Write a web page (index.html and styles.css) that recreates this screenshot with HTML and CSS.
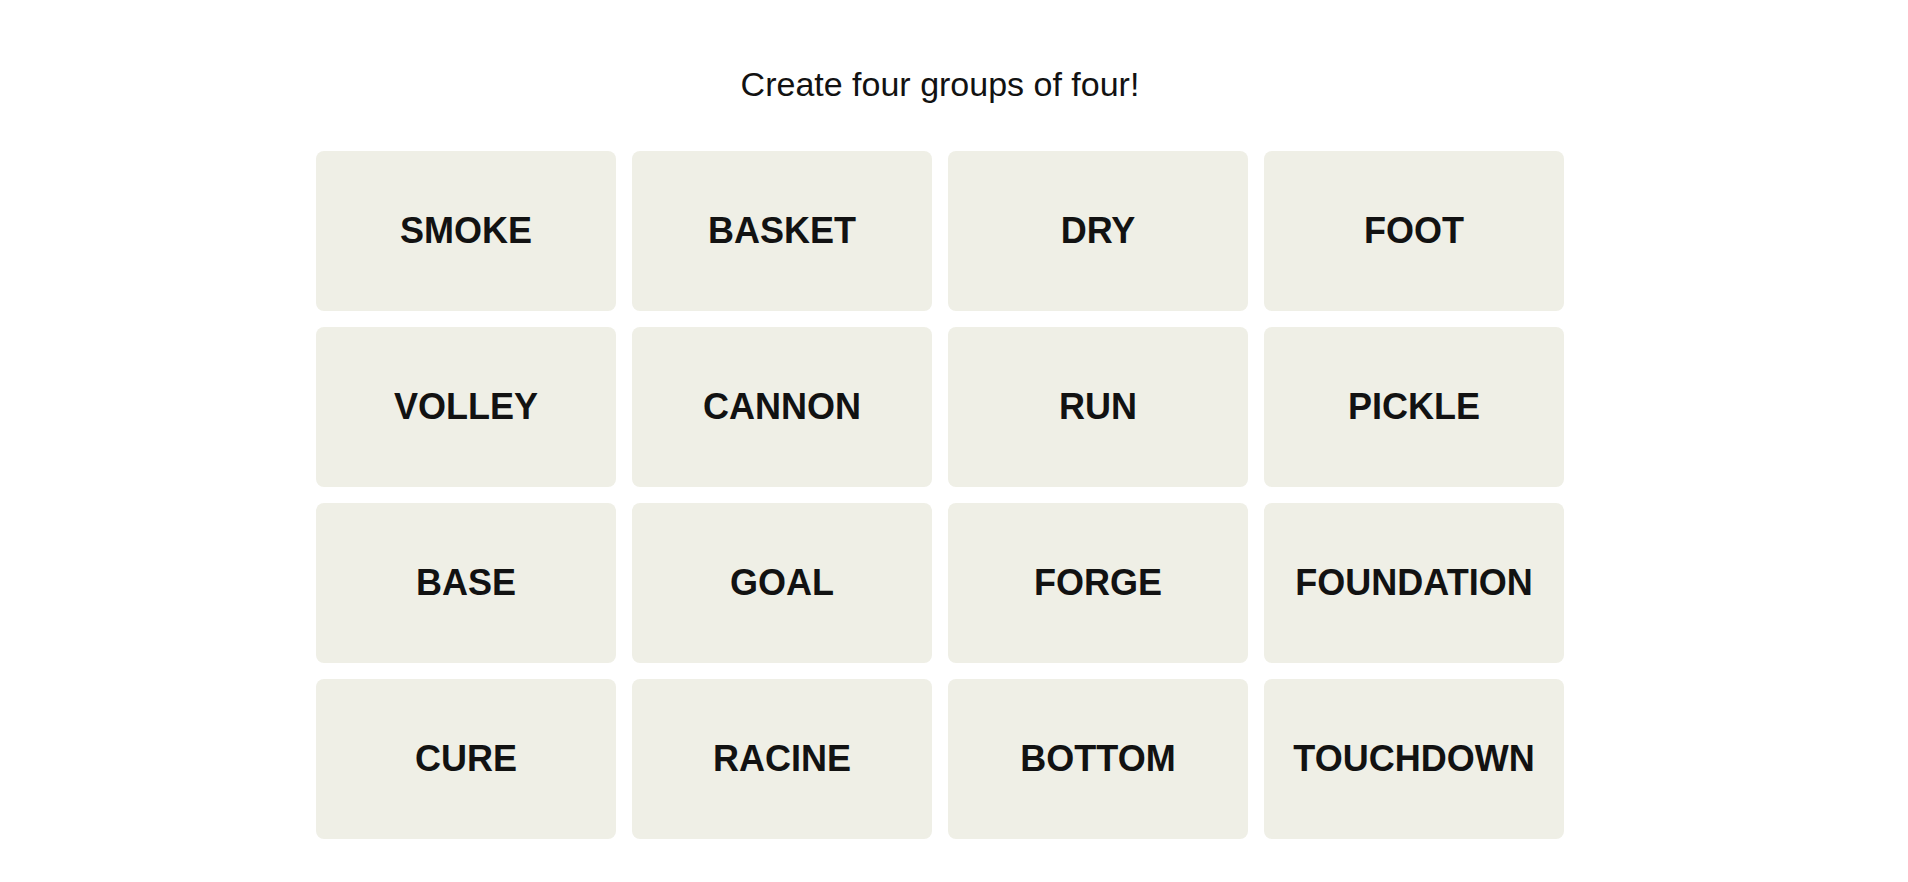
FILE: index.html
```html
<!DOCTYPE html>
<html lang="en">
<head>
  <meta charset="UTF-8">
  <title>Connections</title>
  <link rel="stylesheet" href="styles.css">
</head>
<body>
  <main class="game">
    <h2 class="prompt">Create four groups of four!</h2>

    <div class="board">
      <button class="tile">SMOKE</button>
      <button class="tile">BASKET</button>
      <button class="tile">DRY</button>
      <button class="tile">FOOT</button>

      <button class="tile">VOLLEY</button>
      <button class="tile">CANNON</button>
      <button class="tile">RUN</button>
      <button class="tile">PICKLE</button>

      <button class="tile">BASE</button>
      <button class="tile">GOAL</button>
      <button class="tile">FORGE</button>
      <button class="tile">FOUNDATION</button>

      <button class="tile">CURE</button>
      <button class="tile">RACINE</button>
      <button class="tile">BOTTOM</button>
      <button class="tile">TOUCHDOWN</button>
    </div>
  </main>
</body>
</html>
```

FILE: styles.css
```css
body {
  background: #fff;
  margin: 0;
  padding: 0;
  font-family: "Liberation Sans", Arial, sans-serif;
  color: #121212;
}

.game {
  width: 1880px;
  display: flex;
  flex-direction: column;
  align-items: center;
}

.prompt {
  margin: 64px 0 47px;
  font-size: 34px;
  font-weight: normal;
  line-height: 40px;
}

.board {
  display: grid;
  grid-template-columns: repeat(4, 300px);
  grid-auto-rows: 160px;
  gap: 16px;
}

.tile {
  border: none;
  border-radius: 8px;
  background: #efefe6;
  color: #121212;
  font-family: inherit;
  font-size: 36px;
  font-weight: bold;
  padding: 0;
  cursor: pointer;
}
```
